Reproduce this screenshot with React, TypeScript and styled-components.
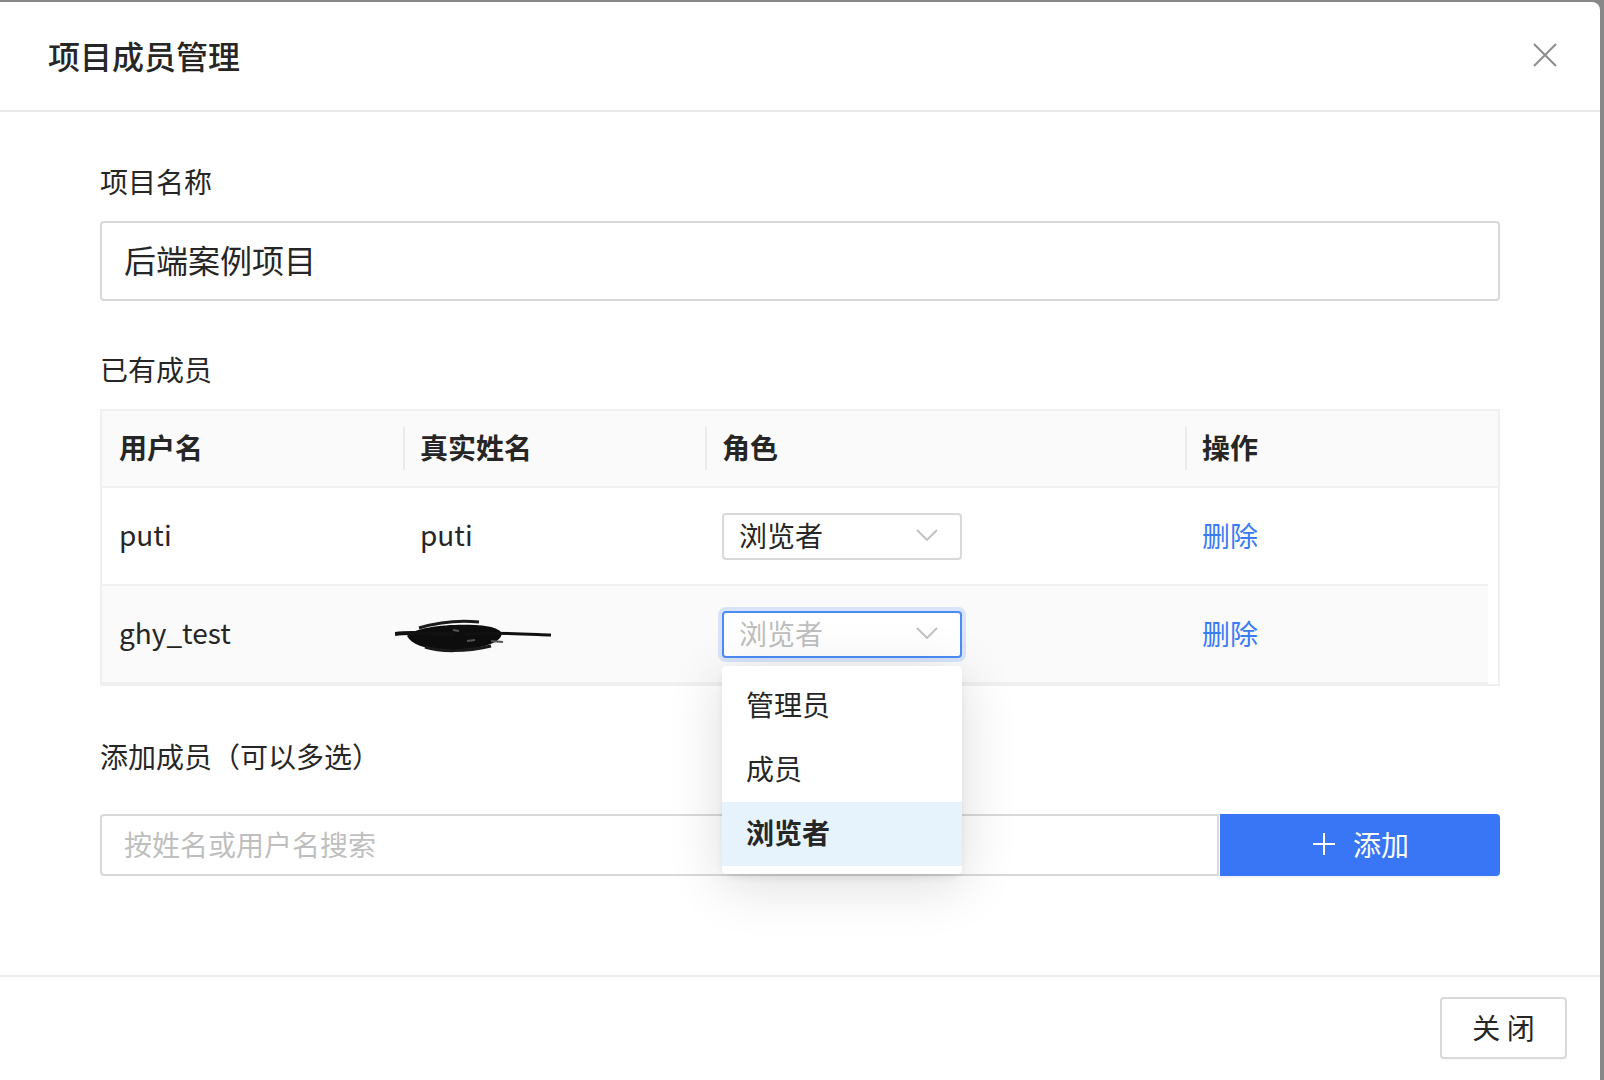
import React from "react";
import styled, { createGlobalStyle } from "styled-components";

const GlobalStyle = createGlobalStyle`
  html, body {
    margin: 0;
    padding: 0;
    background: #888888;
  }
  body {
    font-family: "Noto Sans CJK SC", "Noto Sans", sans-serif;
    color: #262626;
  }
  * { box-sizing: border-box; }
`;

const Page = styled.div`
  width: 1604px;
  height: 1080px;
  padding: 2px 4px 0 0;
`;

const Modal = styled.div`
  width: 1600px;
  height: 1078px;
  background: #fff;
  border-radius: 0 8px 0 0;
  display: flex;
  flex-direction: column;
`;

const Header = styled.div`
  height: 110px;
  flex: none;
  display: flex;
  align-items: center;
  justify-content: space-between;
  padding: 0 43px 2px 48px;
  border-bottom: 2px solid #ebebeb;
`;

const Title = styled.h1`
  margin: 0;
  font-size: 32px;
  font-weight: 500;
  line-height: 1;
  color: #262626;
`;

const CloseX = styled.button`
  border: none;
  background: none;
  padding: 0;
  width: 24px;
  height: 24px;
  display: flex;
  cursor: pointer;
`;

const Body = styled.div`
  flex: 1;
  padding: 48px 100px 0;
  display: flex;
  flex-direction: column;
`;

const Label = styled.div<{ $gapAfter?: number }>`
  font-size: 28px;
  line-height: 42px;
  color: #262626;
  margin-bottom: ${(p) => p.$gapAfter ?? 19}px;
`;

const NameInput = styled.input`
  height: 80px;
  width: 100%;
  border: 2px solid #d9d9d9;
  border-radius: 4px;
  padding: 0 22px 4px;
  font: inherit;
  font-size: 32px;
  color: #262626;
  outline: none;
  margin-bottom: 47px;
`;

const Table = styled.div`
  border: 2px solid #f0f0f0;
  margin-bottom: 49px;
`;

const HeadRow = styled.div`
  display: grid;
  grid-template-columns: 301px 302px 480px 1fr;
  height: 77px;
  background: #fafafa;
  border-bottom: 2px solid #f0f0f0;
`;

const HeadCell = styled.div<{ $sep?: boolean }>`
  position: relative;
  display: flex;
  align-items: center;
  padding: 0 0 3px 17px;
  font-size: 28px;
  font-weight: 600;
  color: #262626;
  &::before {
    content: "";
    display: ${(p) => (p.$sep ? "block" : "none")};
    position: absolute;
    left: 0;
    top: 16px;
    bottom: 16px;
    width: 2px;
    background: #ebebeb;
  }
`;

const BodyRows = styled.div`
  margin-right: 10px;
`;

const Row = styled.div<{ $hover?: boolean }>`
  display: grid;
  grid-template-columns: 301px 302px 480px 1fr;
  height: 98px;
  background: ${(p) => (p.$hover ? "#fafafa" : "#fff")};
  border-bottom: 2px solid #f0f0f0;
`;

const Cell = styled.div`
  position: relative;
  display: flex;
  align-items: center;
  padding: 0 0 0 17px;
  font-size: 28px;
  color: #262626;
`;

const CellText = styled.span`
  position: relative;
  top: -2px;
`;

const Scribble = styled.svg`
  margin-left: -25px;
  margin-top: 4px;
`;

const SelectWrap = styled.div`
  position: relative;
  width: 240px;
`;

const Select = styled.div<{ $focused?: boolean }>`
  height: 47px;
  width: 240px;
  border: 2px solid ${(p) => (p.$focused ? "#4d8cf5" : "#d9d9d9")};
  box-shadow: ${(p) => (p.$focused ? "0 0 0 4px rgba(77, 140, 245, 0.2)" : "none")};
  border-radius: 4px;
  background: #fff;
  display: flex;
  align-items: center;
  justify-content: space-between;
  padding: 0 22px 3px 15px;
  font-size: 28px;
  color: ${(p) => (p.$focused ? "#bfbfbf" : "#262626")};
`;

const Dropdown = styled.ul`
  position: absolute;
  top: calc(100% + 8px);
  left: 0;
  width: 240px;
  margin: 0;
  padding: 8px 0;
  list-style: none;
  background: #fff;
  border-radius: 4px;
  box-shadow: 0 10px 56px rgba(0, 0, 0, 0.14), 0 4px 10px -4px rgba(0, 0, 0, 0.14);
  z-index: 10;
`;

const Option = styled.li<{ $selected?: boolean }>`
  height: 64px;
  display: flex;
  align-items: center;
  padding: 0 24px 3px;
  font-size: 28px;
  color: #262626;
  font-weight: ${(p) => (p.$selected ? 600 : 400)};
  background: ${(p) => (p.$selected ? "#e6f3fd" : "transparent")};
`;

const DeleteLink = styled.a`
  position: relative;
  top: -1px;
  font-size: 28px;
  color: #3a7cf5;
  cursor: pointer;
`;

const SearchRow = styled.div`
  display: flex;
  height: 62px;
`;

const SearchInput = styled.input`
  flex: 1;
  height: 62px;
  border: 2px solid #d9d9d9;
  border-radius: 4px 0 0 4px;
  padding: 0 22px 3px;
  font: inherit;
  font-size: 28px;
  outline: none;
  &::placeholder {
    color: #bfbfbf;
  }
`;

const AddButton = styled.button`
  width: 280px;
  height: 62px;
  margin-left: 1px;
  border: none;
  border-radius: 0 4px 4px 0;
  background: #3876f6;
  color: #fff;
  font: inherit;
  font-size: 28px;
  display: flex;
  align-items: center;
  justify-content: center;
  gap: 18px;
  padding: 0 0 2px 2px;
  box-shadow: 0 2px 0 rgba(0, 0, 0, 0.045);
  cursor: pointer;
`;

const Footer = styled.div`
  flex: none;
  border-top: 2px solid #ebebeb;
  padding: 20px 33px 21px;
  display: flex;
  justify-content: flex-end;
`;

const CloseButton = styled.button`
  width: 127px;
  height: 62px;
  border: 2px solid #d9d9d9;
  border-radius: 4px;
  background: #fff;
  font: inherit;
  font-size: 28px;
  color: #262626;
  padding: 0 0 3px;
  box-shadow: 0 2px 0 rgba(0, 0, 0, 0.02);
  cursor: pointer;
`;

const Chevron = () => (
  <svg width="22" height="12" viewBox="0 0 22 12" fill="none">
    <polyline points="1,1 11,11 21,1" stroke="#bfbfbf" strokeWidth="1.8" />
  </svg>
);

export default function App() {
  return (
    <Page>
      <GlobalStyle />
      <Modal>
        <Header>
          <Title>项目成员管理</Title>
          <CloseX aria-label="close">
            <svg width="24" height="24" viewBox="0 0 24 24">
              <path d="M1 1 L23 23 M23 1 L1 23" stroke="#8c8c8c" strokeWidth="2" />
            </svg>
          </CloseX>
        </Header>
        <Body>
          <Label>项目名称</Label>
          <NameInput readOnly value="后端案例项目" />
          <Label>已有成员</Label>
          <Table>
            <HeadRow>
              <HeadCell>用户名</HeadCell>
              <HeadCell $sep>真实姓名</HeadCell>
              <HeadCell $sep>角色</HeadCell>
              <HeadCell $sep>操作</HeadCell>
            </HeadRow>
            <BodyRows>
              <Row>
                <Cell><CellText>puti</CellText></Cell>
                <Cell><CellText>puti</CellText></Cell>
                <Cell>
                  <SelectWrap>
                    <Select>
                      浏览者
                      <Chevron />
                    </Select>
                  </SelectWrap>
                </Cell>
                <Cell>
                  <DeleteLink>删除</DeleteLink>
                </Cell>
              </Row>
              <Row $hover>
                <Cell><CellText>ghy_test</CellText></Cell>
                <Cell>
                  <Scribble width="160" height="34" viewBox="0 0 160 34">
                    <path
                      d="M12 17 C 22 8, 50 5, 80 6 C 100 7, 112 12, 104 20 C 96 28, 70 32, 48 31 C 30 30, 16 25, 12 17 Z"
                      fill="#0d0d0d"
                    />
                    <path d="M0 15 C 20 12, 40 16, 60 15" stroke="#111" strokeWidth="4" fill="none" />
                    <path d="M70 15 C 100 13, 130 15, 156 16" stroke="#111" strokeWidth="3" fill="none" />
                    <path d="M24 9 C 44 3, 64 1, 84 3" stroke="#1a1a1a" strokeWidth="3" fill="none" />
                    <path d="M30 28 C 45 33, 70 33, 96 27" stroke="#1a1a1a" strokeWidth="3" fill="none" />
                    <path d="M96 22 L 108 23 M 58 11 L 64 12 M 72 22 L 80 21" stroke="#555" strokeWidth="2" fill="none" />
                  </Scribble>
                </Cell>
                <Cell>
                  <SelectWrap>
                    <Select $focused>
                      浏览者
                      <Chevron />
                    </Select>
                    <Dropdown>
                      <Option>管理员</Option>
                      <Option>成员</Option>
                      <Option $selected>浏览者</Option>
                    </Dropdown>
                  </SelectWrap>
                </Cell>
                <Cell>
                  <DeleteLink>删除</DeleteLink>
                </Cell>
              </Row>
            </BodyRows>
          </Table>
          <Label $gapAfter={37}>添加成员（可以多选）</Label>
          <SearchRow>
            <SearchInput placeholder="按姓名或用户名搜索" />
            <AddButton>
              <svg width="22" height="22" viewBox="0 0 22 22">
                <path d="M11 0 V22 M0 11 H22" stroke="#fff" strokeWidth="2" />
              </svg>
              添加
            </AddButton>
          </SearchRow>
        </Body>
        <Footer>
          <CloseButton>关 闭</CloseButton>
        </Footer>
      </Modal>
    </Page>
  );
}
